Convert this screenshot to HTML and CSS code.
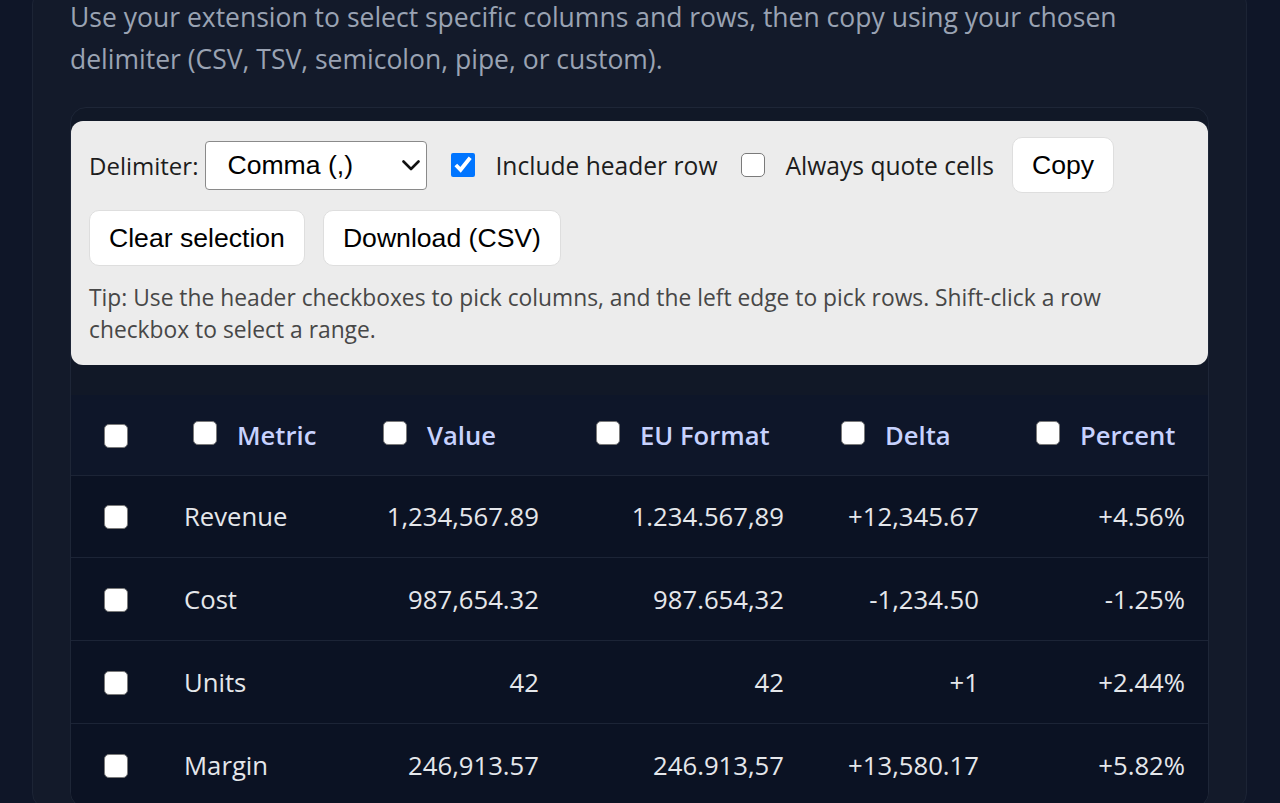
FILE: index.html
```html
<!DOCTYPE html>
<html lang="en">
<head>
<meta charset="utf-8">
<title>Delimited copy demo</title>
<link rel="stylesheet" href="styles.css">
</head>
<body>
<main class="card">
  <p class="intro">Use your extension to select specific columns and rows, then copy using your chosen delimiter (CSV, TSV, semicolon, pipe, or custom).</p>
  <section class="table-wrap">
    <div class="toolbar">
      <label class="field">Delimiter:
        <span class="select-box">
          <select class="select">
            <option>Comma (,)</option>
            <option>Tab</option>
            <option>Semicolon (;)</option>
            <option>Pipe (|)</option>
            <option>Custom</option>
          </select>
          <svg class="chev" width="18" height="11" viewBox="0 0 18 11" aria-hidden="true"><path d="M1.5 1.5 L9 9 L16.5 1.5" fill="none" stroke="#111" stroke-width="2.6" stroke-linecap="round" stroke-linejoin="round"/></svg>
        </span>
      </label>
      <label class="check"><input type="checkbox" class="tcb" checked> Include header row</label>
      <label class="check"><input type="checkbox" class="tcb box"> Always quote cells</label>
      <button class="btn">Copy</button>
      <button class="btn">Clear selection</button>
      <button class="btn">Download (CSV)</button>
      <p class="tip">Tip: Use the header checkboxes to pick columns, and the left edge to pick rows. Shift-click a row checkbox to select a range.</p>
    </div>
    <table class="data">
      <colgroup>
        <col class="c0"><col class="c1"><col class="c2"><col class="c3"><col class="c4"><col class="c5">
      </colgroup>
      <thead>
        <tr>
          <th><input type="checkbox" class="cb box"></th>
          <th><label class="hlabel"><input type="checkbox" class="cb box">Metric</label></th>
          <th><label class="hlabel"><input type="checkbox" class="cb box">Value</label></th>
          <th><label class="hlabel"><input type="checkbox" class="cb box">EU Format</label></th>
          <th><label class="hlabel"><input type="checkbox" class="cb box">Delta</label></th>
          <th><label class="hlabel"><input type="checkbox" class="cb box">Percent</label></th>
        </tr>
      </thead>
      <tbody>
        <tr>
          <td><input type="checkbox" class="cb box"></td>
          <td>Revenue</td><td class="num">1,234,567.89</td><td class="num">1.234.567,89</td><td class="num">+12,345.67</td><td class="num">+4.56%</td>
        </tr>
        <tr>
          <td><input type="checkbox" class="cb box"></td>
          <td>Cost</td><td class="num">987,654.32</td><td class="num">987.654,32</td><td class="num">-1,234.50</td><td class="num">-1.25%</td>
        </tr>
        <tr>
          <td><input type="checkbox" class="cb box"></td>
          <td>Units</td><td class="num">42</td><td class="num">42</td><td class="num">+1</td><td class="num">+2.44%</td>
        </tr>
        <tr>
          <td><input type="checkbox" class="cb box"></td>
          <td>Margin</td><td class="num">246,913.57</td><td class="num">246.913,57</td><td class="num">+13,580.17</td><td class="num">+5.82%</td>
        </tr>
      </tbody>
    </table>
  </section>
</main>
</body>
</html>
```
FILE: styles.css
```css
html, body {
  margin: 0;
  padding: 0;
  background: #0f1628;
  font-family: "Open Sans", "Noto Sans", sans-serif;
  overflow: hidden;
}

.card {
  margin: -12px 33px 0 32px;
  padding: 7px 37px 0 37px;
  background: #131a2a;
  border: 1px solid #1c2435;
  border-radius: 16px;
}

.intro {
  margin: 0 0 27px;
  font-size: 26.5px;
  line-height: 42px;
  color: #9aa3b3;
}

.table-wrap {
  padding-top: 13px;
  background: #111827;
  border: 1px solid #1e2637;
  border-radius: 16px;
  overflow: hidden;
}

.toolbar {
  display: flex;
  flex-wrap: wrap;
  align-items: center;
  gap: 17px 18px;
  padding: 16px 18px 19px;
  margin-bottom: 30px;
  background: #ececec;
  border-radius: 12px;
  color: #1d1d1d;
  font-size: 24.6px;
}

.field {
  display: flex;
  align-items: center;
  gap: 7px;
  font-size: 24px;
}

.select-box {
  position: relative;
  display: inline-flex;
}

.select {
  -webkit-appearance: none;
  appearance: none;
  width: 222px;
  height: 49px;
  padding: 0 40px 0 21px;
  font-family: "Liberation Sans", Arial, sans-serif;
  font-size: 26.6px;
  color: #000;
  background: #fff;
  border: 1px solid #8a8a8a;
  border-radius: 4px;
}

.chev {
  position: absolute;
  right: 7px;
  top: 19px;
  pointer-events: none;
}

.check {
  display: flex;
  align-items: center;
  gap: 20px;
}

.tcb {
  width: 24px;
  height: 24px;
  margin: 0 0 0 6px;
  accent-color: #0075ff;
}

.box {
  -webkit-appearance: none;
  appearance: none;
  box-sizing: border-box;
  background: #fff;
  border: 1.5px solid #7a7a7a;
  border-radius: 5px;
}

.btn {
  height: 56px;
  padding: 0 19px;
  font-family: "Liberation Sans", Arial, sans-serif;
  font-size: 26.6px;
  color: #000;
  background: #fff;
  border: 1px solid #dedede;
  border-radius: 10px;
}

.tip {
  flex-basis: 100%;
  max-width: 1060px;
  margin: -1px 0 0;
  font-size: 22.8px;
  line-height: 32px;
  color: #474747;
}

.data {
  width: 100%;
  border-collapse: collapse;
  table-layout: fixed;
}

.c0 { width: 89px; }
.c1 { width: 190px; }
.c2 { width: 213px; }
.c3 { width: 245px; }
.c4 { width: 195px; }
.c5 { width: 206px; }

.data th,
.data td {
  padding: 0 24px;
  text-align: left;
  border-bottom: 1px solid #1c2436;
}

.data th {
  height: 80px;
  background: #0e1629;
  color: #c7d2fe;
  font-size: 25.6px;
  font-weight: 600;
}

.data td {
  height: 82px;
  background: #0b1223;
  color: #e5e7eb;
  font-size: 25.7px;
}

.data td.num {
  text-align: right;
}

.data tbody tr:first-child td {
  height: 81px;
}

.hlabel {
  display: flex;
  align-items: center;
  gap: 20px;
}

.cb {
  width: 24px;
  height: 24px;
  margin: 0 0 0 9px;
  vertical-align: middle;
  position: relative;
  top: -2px;
}
```
